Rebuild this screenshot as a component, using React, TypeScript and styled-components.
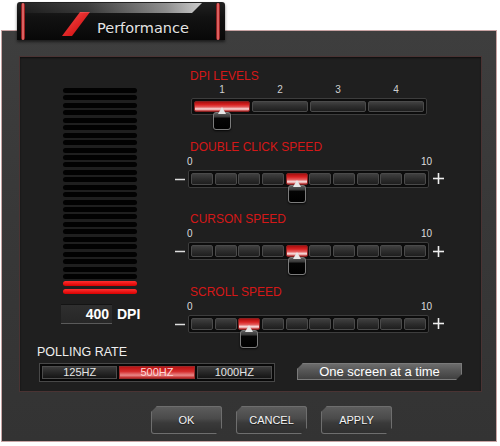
import React from "react";
import styled, { createGlobalStyle, css } from "styled-components";

const GlobalStyle = createGlobalStyle`
  html, body { margin: 0; padding: 0; background: #ffffff; }
  body { font-family: "Liberation Sans", Arial, sans-serif; }
  * { box-sizing: border-box; }
`;

const Page = styled.div`
  width: 500px;
  height: 446px;
  padding-top: 2px;
  display: flex;
  flex-direction: column;
  overflow: hidden;
`;

const Tab = styled.div`
  position: relative;
  z-index: 2;
  margin-left: 17px;
  width: 208px;
  height: 38px;
  display: flex;
  align-items: flex-start;
  background: linear-gradient(#222 0%, #121212 40%, #080808 100%);
  border-radius: 3px 3px 0 0;
  box-shadow: 0 2px 3px rgba(0, 0, 0, 0.55);
  &::before {
    content: "";
    position: absolute;
    left: 8px;
    top: 1px;
    width: 177px;
    height: 10px;
    background: linear-gradient(
      90deg,
      rgba(255, 255, 255, 0.03) 0%,
      rgba(255, 255, 255, 0.14) 35%,
      rgba(220, 220, 220, 0.6) 80%,
      rgba(235, 235, 235, 0.85) 100%
    );
    clip-path: polygon(0 0, 100% 0, calc(100% - 10px) 100%, 0 100%);
  }
`;

const TabBar = styled.div<{ $right?: boolean }>`
  width: 4px;
  align-self: stretch;
  margin: 1px 0 0 4px;
  border-radius: 2px;
  background: linear-gradient(90deg, #6a0000, #ff8080 50%, #7a0000);
  ${(p) =>
    p.$right &&
    css`
      margin: 1px 5px 0 auto;
    `}
`;

const Stripe = styled.svg`
  flex: none;
  margin: 10px 0 0 37px;
`;

const TabTitle = styled.div`
  position: relative;
  margin: 18px 0 0 7px;
  font-family: "DejaVu Sans", "Liberation Sans", sans-serif;
  font-size: 14.5px;
  line-height: 17px;
  color: #e4e4e4;
  text-shadow: 0 1px 1px #000;
`;

const Window = styled.div`
  margin: -10px 0 0 1px;
  width: 496px;
  height: 412px;
  border: 1px solid #c9a4a4;
  background: linear-gradient(#3e3e3e 0%, #383838 45%, #333333 100%);
  padding: 25px 0 0 17px;
  display: flex;
  flex-direction: column;
  align-items: flex-start;
`;

const Panel = styled.div`
  width: 463px;
  height: 336px;
  border: 1px solid #4a3333;
  background: #1f1f1f;
  box-shadow: inset 0 1px 2px rgba(0, 0, 0, 0.6);
  display: flex;
  flex-direction: column;
`;

const TopArea = styled.div`
  display: flex;
  height: 288px;
`;

const MeterCol = styled.div`
  width: 155px;
  padding: 31px 0 0 43px;
  display: flex;
  flex-direction: column;
  align-items: flex-start;
`;

const Meter = styled.div`
  display: flex;
  flex-direction: column;
  gap: 2.44px;
`;

const MeterBar = styled.div<{ $on: boolean }>`
  width: 74px;
  height: 5px;
  border-radius: 2.5px;
  background: ${(p) => (p.$on ? "linear-gradient(#ff3030, #d80000)" : "#020202")};
`;

const DpiRow = styled.div`
  display: flex;
  align-items: center;
  margin: 10px 0 0 -2px;
`;

const DpiBox = styled.div`
  width: 51px;
  height: 20px;
  padding-right: 3px;
  display: flex;
  align-items: center;
  justify-content: flex-end;
  background: linear-gradient(#2f2f2f, #272727);
  border-top: 1px solid #141414;
  border-bottom: 1px solid #5a5a5a;
  font-weight: bold;
  font-size: 14px;
  color: #ffffff;
`;

const DpiUnit = styled.span`
  margin-left: 5px;
  font-weight: bold;
  font-size: 14px;
  color: #ffffff;
`;

const SliderCol = styled.div`
  flex: 1;
  padding-top: 12px;
  display: flex;
  flex-direction: column;
  align-items: flex-start;
`;

const SectionLabel = styled.div`
  margin-left: 15px;
  font-size: 12px;
  line-height: 14px;
  color: #d41818;
`;

const LevelNumbers = styled.div`
  margin: 2px 0 0 16px;
  width: 236px;
  padding: 0 3px;
  display: grid;
  grid-template-columns: repeat(4, 1fr);
  gap: 2px;
  font-size: 10px;
  line-height: 10px;
  color: #d0d0d0;
  text-align: center;
`;

const Track = styled.div<{ $count: number; $w: number; $h: number; $gap: number }>`
  width: ${(p) => p.$w}px;
  height: ${(p) => p.$h}px;
  padding: 2px;
  display: grid;
  grid-template-columns: repeat(${(p) => p.$count}, 1fr);
  gap: ${(p) => p.$gap}px;
  background: #0c0c0c;
  border: 1px solid #3d3d3d;
  border-radius: 2px;
`;

const LevelTrackWrap = styled.div`
  margin: 3px 0 0 16px;
`;

const Segment = styled.div<{ $active?: boolean }>`
  position: relative;
  border-radius: 2px;
  border: 1px solid #4a4a4a;
  background: linear-gradient(#404040 0%, #2d2d2d 50%, #1e1e1e 100%);
  ${(p) =>
    p.$active &&
    css`
      border-color: #8a2020;
      background: linear-gradient(
        #a81010 0%,
        #d82222 30%,
        #e45a5a 55%,
        #f4d2d2 75%,
        #e8a4a4 88%,
        #b01c1c 100%
      );
    `}
`;

const Thumb = styled.div`
  position: absolute;
  z-index: 3;
  left: 50%;
  top: calc(100% + 1px);
  transform: translateX(-50%);
  width: 18px;
  height: 18px;
  border-radius: 3px;
  border: 1px solid #7c7c7c;
  background: linear-gradient(#5c5c5c 0%, #3a3a3a 22%, #050505 34%, #000 100%);
  box-shadow: 0 1px 2px rgba(0, 0, 0, 0.8);
  &::before {
    content: "";
    position: absolute;
    left: 50%;
    top: -6px;
    transform: translateX(-50%);
    border-left: 4px solid transparent;
    border-right: 4px solid transparent;
    border-bottom: 7px solid #e6e6e6;
  }
`;

const SliderBlock = styled.div`
  margin-top: 24.5px;
  display: flex;
  flex-direction: column;
  align-items: flex-start;
`;

const Scale = styled.div`
  margin: 3px 0 0 12px;
  width: 245px;
  display: flex;
  justify-content: space-between;
  font-size: 10px;
  line-height: 10px;
  color: #dddddd;
`;

const TrackRow = styled.div`
  margin-top: 3px;
  display: flex;
  align-items: center;
`;

const SignIcon = styled.svg<{ $gap?: number }>`
  flex: none;
  margin-left: ${(p) => p.$gap ?? 0}px;
`;

const BottomArea = styled.div`
  display: flex;
  flex-direction: column;
  align-items: flex-start;
`;

const PollingLabel = styled.div`
  margin-left: 17px;
  font-size: 12.5px;
  line-height: 14px;
  color: #eeeeee;
`;

const PollingRow = styled.div`
  margin-top: 4px;
  display: flex;
  align-items: flex-start;
`;

const RateGroup = styled.div`
  margin-left: 19px;
  width: 236px;
  height: 19px;
  padding: 2px;
  display: flex;
  gap: 2px;
  background: #080808;
  border: 1px solid #484848;
`;

const RateButton = styled.button<{ $active?: boolean }>`
  flex: 1;
  padding: 0;
  border: 1px solid #4c4c4c;
  font-family: "Liberation Sans", Arial, sans-serif;
  font-size: 11px;
  line-height: 1;
  color: #e6e6e6;
  background: linear-gradient(#3c3c3c 0%, #272727 50%, #151515 100%);
  cursor: pointer;
  ${(p) =>
    p.$active &&
    css`
      border-color: #9a2a2a;
      color: #ffd8d8;
      background: linear-gradient(#b81414 0%, #d42a2a 40%, #e88888 75%, #b82020 100%);
    `}
`;

const bevel = css`
  clip-path: polygon(
    6px 0,
    100% 0,
    100% calc(100% - 6px),
    calc(100% - 6px) 100%,
    0 100%,
    0 6px
  );
`;

const ScreenButton = styled.button`
  margin-left: 22px;
  width: 165px;
  height: 17px;
  padding: 0;
  border: none;
  font-family: "Liberation Sans", Arial, sans-serif;
  font-size: 13px;
  line-height: 1;
  color: #ffffff;
  background: linear-gradient(#707070 0%, #565656 45%, #3e3e3e 100%);
  box-shadow: inset 0 0 0 1px #7a7a7a;
  ${bevel}
  cursor: pointer;
`;

const ButtonRow = styled.div`
  margin: 14px 0 0 132px;
  display: flex;
  gap: 14px;
`;

const ActionButton = styled.button`
  width: 71px;
  height: 28px;
  padding: 0;
  border: none;
  font-family: "Liberation Sans", Arial, sans-serif;
  font-size: 11px;
  color: #f4f4f4;
  text-shadow: 0 1px 1px rgba(0, 0, 0, 0.6);
  background: linear-gradient(#5e5e5e 0%, #4a4a4a 45%, #3a3a3a 60%, #2e2e2e 100%);
  box-shadow: inset 0 0 0 1px #6e6e6e;
  border-radius: 3px;
  ${bevel}
  cursor: pointer;
`;

function Minus() {
  return (
    <SignIcon width="13" height="18" viewBox="0 0 13 18">
      <line x1="0" y1="9.5" x2="10" y2="9.5" stroke="#dddddd" strokeWidth="1.5" />
    </SignIcon>
  );
}

function Plus() {
  return (
    <SignIcon $gap={4} width="11" height="11" viewBox="0 0 11 11">
      <line x1="0" y1="5.5" x2="11" y2="5.5" stroke="#eeeeee" strokeWidth="1.6" />
      <line x1="5.5" y1="0" x2="5.5" y2="11" stroke="#eeeeee" strokeWidth="1.6" />
    </SignIcon>
  );
}

function Slider({ label, value }: { label: string; value: number }) {
  return (
    <SliderBlock>
      <SectionLabel>{label}</SectionLabel>
      <Scale>
        <span>0</span>
        <span>10</span>
      </Scale>
      <TrackRow>
        <Minus />
        <Track $count={10} $w={241} $h={18} $gap={1.5}>
          {Array.from({ length: 10 }, (_, i) => (
            <Segment key={i} $active={i === value}>
              {i === value && <Thumb />}
            </Segment>
          ))}
        </Track>
        <Plus />
      </TrackRow>
    </SliderBlock>
  );
}

export default function App() {
  const bars = Array.from({ length: 28 }, (_, i) => i >= 26);
  const levels = ["1", "2", "3", "4"];
  const rates = ["125HZ", "500HZ", "1000HZ"];
  return (
    <>
      <GlobalStyle />
      <Page>
        <Tab>
          <TabBar />
          <Stripe width="28" height="24" viewBox="0 0 28 24">
            <defs>
              <linearGradient id="stripeRed" x1="0" y1="0" x2="1" y2="1">
                <stop offset="0" stopColor="#ff5050" />
                <stop offset="1" stopColor="#c40000" />
              </linearGradient>
            </defs>
            <polygon points="18,0 28,0 10,24 0,24" fill="url(#stripeRed)" />
          </Stripe>
          <TabTitle>Performance</TabTitle>
          <TabBar $right />
        </Tab>
        <Window>
          <Panel>
            <TopArea>
              <MeterCol>
                <Meter>
                  {bars.map((on, i) => (
                    <MeterBar key={i} $on={on} />
                  ))}
                </Meter>
                <DpiRow>
                  <DpiBox>400</DpiBox>
                  <DpiUnit>DPI</DpiUnit>
                </DpiRow>
              </MeterCol>
              <SliderCol>
                <SectionLabel>DPI LEVELS</SectionLabel>
                <LevelNumbers>
                  {levels.map((l) => (
                    <span key={l}>{l}</span>
                  ))}
                </LevelNumbers>
                <LevelTrackWrap>
                  <Track $count={4} $w={236} $h={17} $gap={2}>
                    {levels.map((l, i) => (
                      <Segment key={l} $active={i === 0}>
                        {i === 0 && <Thumb />}
                      </Segment>
                    ))}
                  </Track>
                </LevelTrackWrap>
                <Slider label="DOUBLE CLICK SPEED" value={4} />
                <Slider label="CURSON SPEED" value={4} />
                <Slider label="SCROLL SPEED" value={2} />
              </SliderCol>
            </TopArea>
            <BottomArea>
              <PollingLabel>POLLING RATE</PollingLabel>
              <PollingRow>
                <RateGroup>
                  {rates.map((r) => (
                    <RateButton key={r} $active={r === "500HZ"}>
                      {r}
                    </RateButton>
                  ))}
                </RateGroup>
                <ScreenButton>One screen at a time</ScreenButton>
              </PollingRow>
            </BottomArea>
          </Panel>
          <ButtonRow>
            <ActionButton>OK</ActionButton>
            <ActionButton>CANCEL</ActionButton>
            <ActionButton>APPLY</ActionButton>
          </ButtonRow>
        </Window>
      </Page>
    </>
  );
}
